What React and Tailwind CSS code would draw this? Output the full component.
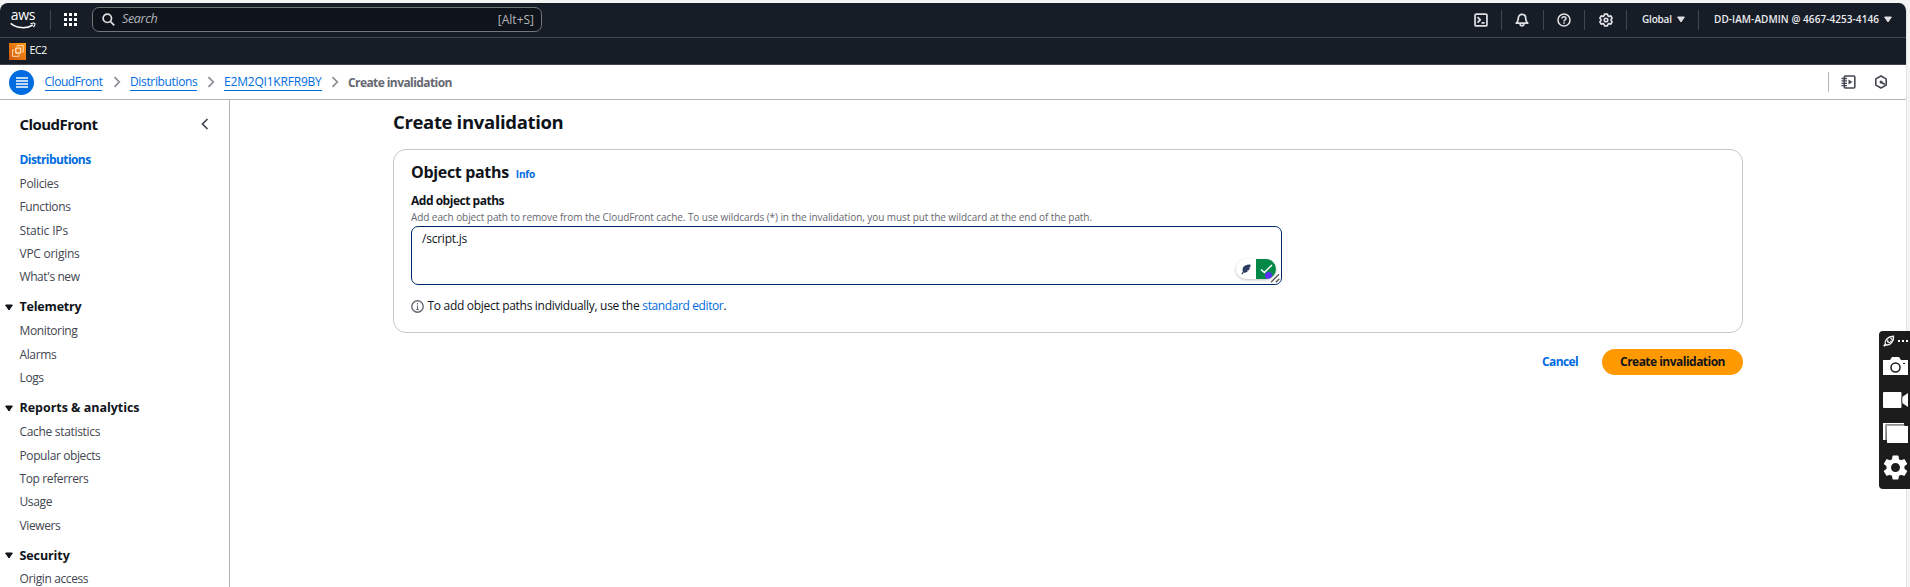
import React from "react";

const Chevron = () => (
  <svg width="8" height="12" viewBox="0 0 8 12" fill="none" stroke="#8c8c94" strokeWidth="1.7" className="shrink-0">
    <path d="M1.5 1.2 6.3 6 1.5 10.8" />
  </svg>
);

const Caret = ({ color }) => (
  <svg width="8" height="7" viewBox="0 0 8 7" fill={color} stroke={color} strokeWidth="1" strokeLinejoin="round" className="shrink-0">
    <path d="M.6 1h6.800L4 6z" />
  </svg>
);

const Divider = () => <span className="h-5 w-px shrink-0 bg-[#424650]" />;

const stroke16 = {
  width: 14,
  height: 14,
  viewBox: "0 0 16 16",
  fill: "none",
  strokeWidth: 2,
  strokeLinejoin: "round",
};

const TerminalIcon = () => (
  <svg {...stroke16} stroke="#dedee3">
    <rect x="1.2" y="1.2" width="13.6" height="13.6" rx="1.5" />
    <path d="M4 4.6 7.2 7.8 4 11M8.6 11.3h3.6" />
  </svg>
);

const BellIcon = () => (
  <svg {...stroke16} stroke="#dedee3">
    <path d="M8 1.6c-2.6 0-4.2 1.9-4.2 4.4 0 3-.9 4.3-2.3 5.7h13c-1.4-1.4-2.3-2.7-2.3-5.7C12.2 3.500 10.600 1.600 8 1.600z" />
    <path d="M5.8 12.500c.2 1.500 1 2.300 2.200 2.300s2-.8 2.200-2.300" />
  </svg>
);

const HelpIcon = () => (
  <svg {...stroke16} stroke="#dedee3" strokeWidth="1.8">
    <circle cx="8" cy="8" r="6.9" />
    <path d="M5.7 6.400C5.700 5 6.700 4.200 8 4.200s2.300.8 2.300 2c0 1.700-2.300 1.700-2.300 3.500M8 10.700v1.700" />
  </svg>
);

const GearIcon = () => (
  <svg {...stroke16} stroke="#dedee3" strokeWidth="1.9">
    <path d="M6.300 1.300h3.400l.5 1.900 1.300.7 2-.6 1.500 2.700-1.300 1.400v1.200l1.300 1.400-1.500 2.700-2-.6-1.300.7-.5 1.900H6.300l-.5-1.900-1.300-.7-2 .6L1 10l1.300-1.400V7.400L1 6l1.500-2.700 2 .6 1.300-.7z" />
    <circle cx="8" cy="8" r="2" />
  </svg>
);

const TopBar = () => (
  <div className="flex h-[35px] items-center border-b border-[#424650] pb-px">
    <div className="ml-[10px] flex w-[26px] flex-col items-center">
      <span className="-mt-[2px] text-[14px] font-normal leading-[12px] tracking-[-0.200px] text-white">aws</span>
      <svg width="26" height="7" viewBox="0 0 26 7" fill="none" stroke="#fff" strokeWidth="1.5" className="mt-px">
        <path d="M.7 1.300C7 6.500 16.500 7 22.800 3" />
        <path d="M20.500 1.700c2-.7 3.800-.8 4.200-.3.400.5-.1 2.200-1.200 3.700" strokeWidth="1.2" />
      </svg>
    </div>
    <span className="ml-[14px] flex"><Divider /></span>
    <div className="ml-[13px] grid grid-cols-3 gap-[2px]">
      {Array.from({ length: 9 }, (_, i) => (
        <span key={i} className="size-[3px] bg-white" />
      ))}
    </div>
    <div className="ml-[15px] flex h-[25px] w-[450px] items-center rounded-[7px] border border-[#72747e] bg-[#0f141a] pl-[9px] pr-[7px]">
      <svg width="13" height="13" viewBox="0 0 13 13" fill="none" stroke="#dedee3" strokeWidth="1.7">
        <circle cx="5.3" cy="5.3" r="4.2" />
        <path d="m8.300 8.300 4 4" />
      </svg>
      <span className="ml-[7px] text-[12.5px] italic tracking-[-0.35px] text-[#b4b4bb]">Search</span>
      <span className="ml-auto text-[12px] text-[#b4b4bb]">[Alt+S]</span>
    </div>
    <div className="ml-auto flex items-center">
      <TerminalIcon />
      <span className="ml-[13px] flex"><Divider /></span>
      <span className="ml-[13px] flex"><BellIcon /></span>
      <span className="ml-[14px] flex"><Divider /></span>
      <span className="ml-[13px] flex"><HelpIcon /></span>
      <span className="ml-[13px] flex"><Divider /></span>
      <span className="ml-[14px] flex"><GearIcon /></span>
      <span className="ml-[13px] flex"><Divider /></span>
      <span className="ml-[15px] w-[35px] whitespace-nowrap text-[10px] font-semibold tracking-[-0.2px] text-[#ebebf0]">Global</span>
      <Caret color="#dedee3" />
      <span className="ml-[13px] flex"><Divider /></span>
      <span className="ml-[15px] w-[170px] whitespace-nowrap text-[10px] font-semibold tracking-[0.06px] text-[#ebebf0]">DD-IAM-ADMIN @ 4667-4253-4146</span>
      <Caret color="#dedee3" />
      <span className="w-[14px]" />
    </div>
  </div>
);

const FavoritesBar = () => (
  <div className="flex h-[27px] items-center border-b border-[#424650] pl-[9px]">
    <span className="flex size-[17px] items-center justify-center bg-gradient-to-tr from-[#cf5512] to-[#fb9a10]">
      <svg width="12" height="12" viewBox="0 0 12 12" fill="none" stroke="#ffe3c4" strokeWidth="0.9">
        <rect x="3.8" y="3.2" width="4.8" height="4.8" rx="0.5" strokeWidth="1.3" />
        <path d="M5 1.600V.6h6.300v6.300h-1.200M2.400 5H.6v6.300h6.300V9.600" />
      </svg>
    </span>
    <span className="ml-[3.5px] text-[10.5px] font-medium tracking-[-0.4px] text-white">EC2</span>
  </div>
);

const Crumb = ({ children }) => (
  <span className="h-[17px] whitespace-nowrap border-b border-[#006ce0] text-[12px] leading-[16px] text-[#006ce0]">{children}</span>
);

const Breadcrumbs = () => (
  <div className="flex h-[35px] items-center border-b border-[#b4b4bb] bg-white">
    <span className="ml-[9px] flex size-[25px] items-center justify-center rounded-full bg-[#006ce0]">
      <svg width="12" height="11" viewBox="0 0 12 11" stroke="#fff" strokeWidth="1.3">
        <path d="M0 1h12M0 4h12M0 7h12M0 10h12" />
      </svg>
    </span>
    <div className="ml-[10.5px] flex items-center">
      <span className="flex w-[68.5px] tracking-[-0.45px]"><Crumb>CloudFront</Crumb></span>
      <Chevron />
      <span className="ml-[9px] flex w-[77px] tracking-[-0.35px]"><Crumb>Distributions</Crumb></span>
      <Chevron />
      <span className="ml-[9px] flex w-[107px] tracking-[-0.2px]"><Crumb>E2M2QI1KRFR9BY</Crumb></span>
      <Chevron />
      <span className="ml-[9px] whitespace-nowrap text-[12px] font-bold leading-[17px] tracking-[-0.58px] text-[#656871]">Create invalidation</span>
    </div>
    <span className="ml-auto h-5 w-px bg-[#b4b4bb]" />
    <svg width="15" height="14" viewBox="0 0 15 14" fill="none" stroke="#424650" strokeWidth="1.6" className="ml-[12px]">
      <rect x="3.3" y="1" width="10.5" height="12" rx="1" />
      <path d="M.5 3.500h5.500M.5 5.900h5.500M.5 8.300h5.500M.5 10.700h5.500" strokeWidth="1.3" />
      <path d="M7.500 4.500v5L11.500 7z" fill="#424650" stroke="none" />
    </svg>
    <svg width="14" height="14" viewBox="0 0 14 14" fill="none" stroke="#424650" strokeWidth="1.6" className="ml-[18px] mr-[18px]">
      <path d="M7 1 12.200 3.900v6.200L7 13l-5.200-2.900V3.900z" strokeLinejoin="round" />
      <path d="M7 7l3.800 2.500" strokeWidth="1.6" />
      <circle cx="7" cy="7" r="1.5" fill="#424650" stroke="none" />
    </svg>
  </div>
);

const NavItem = ({ children, className = "" }) => (
  <li className={"h-[23.3px] whitespace-nowrap pl-[19.5px] text-[12px] leading-[23.3px] text-[#424650] " + className}>{children}</li>
);

const NavHeading = ({ children, className = "" }) => (
  <h3 className="mt-[7px] mb-[1px] flex h-[23px] items-center text-[12.5px] font-bold leading-[23px] text-[#0f141a]">
    <span className="ml-[4.5px] mt-px flex w-[15px]"><Caret color="#0f141a" /></span>
    <span className={"whitespace-nowrap " + className}>{children}</span>
  </h3>
);

const Sidebar = () => (
  <nav className="h-full w-[230px] shrink-0 overflow-hidden border-r border-[#b4b4bb] bg-white">
    <div className="flex h-[48px] items-center pl-[19.5px] pr-[20px]">
      <h2 className="text-[15px] font-bold tracking-[-0.55px] text-[#0f141a]">CloudFront</h2>
      <svg width="8" height="12" viewBox="0 0 8 12" fill="none" stroke="#424650" strokeWidth="1.7" className="mb-[1px] ml-auto">
        <path d="M6.500 1 1.500 6l5 5" />
      </svg>
    </div>
    <ul>
      <li className="h-[24px] pl-[19.5px] text-[12px] font-bold leading-[23px] tracking-[-0.57px] text-[#006ce0]">Distributions</li>
      <NavItem className="tracking-[-0.34px]">Policies</NavItem>
      <NavItem className="tracking-[-0.36px]">Functions</NavItem>
      <NavItem className="tracking-[-0.15px]">Static IPs</NavItem>
      <NavItem className="tracking-[-0.26px]">VPC origins</NavItem>
      <NavItem className="tracking-[-0.42px]">What's new</NavItem>
    </ul>
    <NavHeading className="tracking-[-0.19px]">Telemetry</NavHeading>
    <ul>
      <NavItem className="tracking-[-0.38px]">Monitoring</NavItem>
      <NavItem className="tracking-[-0.38px]">Alarms</NavItem>
      <NavItem className="tracking-[-0.38px]">Logs</NavItem>
    </ul>
    <NavHeading className="tracking-[-0.03px]">Reports &amp; analytics</NavHeading>
    <ul>
      <NavItem className="tracking-[-0.32px]">Cache statistics</NavItem>
      <NavItem className="tracking-[-0.4px]">Popular objects</NavItem>
      <NavItem className="tracking-[-0.38px]">Top referrers</NavItem>
      <NavItem className="tracking-[-0.38px]">Usage</NavItem>
      <NavItem className="tracking-[-0.38px]">Viewers</NavItem>
    </ul>
    <NavHeading className="tracking-[-0.1px]">Security</NavHeading>
    <ul>
      <li className="whitespace-nowrap pl-[19.5px] pt-[3px] text-[12px] leading-[16px] tracking-[-0.38px] text-[#424650]">Origin access</li>
    </ul>
  </nav>
);

const WritingBadge = () => (
  <div className="absolute bottom-[5px] right-[5px] flex h-5 w-10 overflow-hidden rounded-full bg-white shadow-[0_1px_3px_rgba(0,0,0,0.25)]">
    <span className="flex w-5 items-center justify-center">
      <svg width="10" height="11" viewBox="0 0 10 11" fill="#2c3c63">
        <path d="M9.500.7C6.500.2 2.700 1.700 1.800 4.200c-.4 1.200-.3 2.300.1 3.200L.4 9.800l.7.600L2.700 8.500c1.500.5 3.200-.1 4.200-1.300l-1.200-.4 2.100-.5c.5-.7.9-1.500 1.100-2.200l-1.100-.2 1.500-.8c.3-.9.300-1.700.2-2.400z" />
      </svg>
    </span>
    <span className="relative flex w-5 items-center justify-center bg-[#048848]">
      <svg width="13" height="10" viewBox="0 0 13 10" fill="none" stroke="#fff" strokeWidth="1.5">
        <path d="m1 5.500 3.300 3L12 1" />
      </svg>
      <span className="absolute bottom-0 right-[4px] size-[7px] rounded-full bg-[#5b2dff]" />
    </span>
  </div>
);

const Main = () => (
  <main className="flex w-[1350px] flex-col pt-[8px]">
    <h1 className="h-7 whitespace-nowrap text-[18.5px] font-bold leading-7 tracking-[-0.35px] text-[#0f141a]">Create invalidation</h1>
    <section className="mt-[13px] h-[184px] rounded-[13px] border border-[#c6c6cd] px-[17px] pt-[12px]">
      <div className="flex h-5 items-baseline">
        <h2 className="whitespace-nowrap text-[16px] font-bold leading-5 tracking-[-0.33px] text-[#0f141a]">Object paths</h2>
        <span className="ml-[7px] text-[10px] font-bold tracking-[-0.2px] text-[#006ce0]">Info</span>
      </div>
      <div className="mt-[11px] h-4 text-[12px] font-bold leading-4 tracking-[-0.48px] text-[#0f141a]">Add object paths</div>
      <p className="h-[17px] whitespace-nowrap text-[10px] leading-[16px] tracking-[-0.077px] text-[#656871]">
        Add each object path to remove from the CloudFront cache. To use wildcards (*) in the invalidation, you must put the wildcard at the end of the path.
      </p>
      <div className="relative h-[59px] w-[871px] rounded-[7px] border border-[#002b66] bg-white pl-[10px] pt-[4px] text-[12px] leading-[16px] tracking-[-0.23px] text-[#0f141a]">
        /script.js
        <WritingBadge />
        <svg width="10" height="10" viewBox="0 0 10 10" stroke="#555" strokeWidth="1.3" className="absolute bottom-[1px] right-[1px]">
          <path d="M1 9.300 9 1.300M5.800 9.300 9.300 5.800" />
        </svg>
      </div>
      <div className="mt-[12px] flex h-[18px] items-center text-[12px] leading-[18px] text-[#0f141a]">
        <svg width="13" height="13" viewBox="0 0 13 13" fill="none" stroke="#656871" strokeWidth="1.4">
          <circle cx="6.5" cy="6.5" r="5.7" />
          <path d="M6.500 5.500v4.200M6.500 3v1.400M5.200 9.500h2.600" strokeWidth="1.1" />
        </svg>
        <span className="ml-[3.5px] whitespace-nowrap tracking-[-0.3px]">To add object paths individually, use the</span>
        <span className="ml-[3px] whitespace-nowrap tracking-[-0.39px] text-[#006ce0]">standard editor</span>
        <span>.</span>
      </div>
    </section>
    <div className="mt-4 flex h-[26px] items-center justify-end">
      <button className="text-[12px] font-bold tracking-[-0.62px] text-[#006ce0]">Cancel</button>
      <button className="ml-[24px] flex h-[26px] w-[141px] items-center justify-center rounded-full bg-[#ff9900] text-[12px] font-bold tracking-[-0.52px] text-[#0f141a]">
        <span className="whitespace-nowrap">Create invalidation</span>
      </button>
    </div>
  </main>
);

const CapturePanel = () => (
  <aside className="absolute right-0 top-[331px] flex h-[158px] w-[31px] flex-col items-start rounded-l-[4px] bg-[#1c1c1c] pl-[4px] pt-[4px]">
    <div className="flex h-[12px] items-center">
      <svg width="12" height="12" viewBox="0 0 12 12" fill="none" stroke="#eee" strokeWidth="1.4">
        <path d="M.8 11.200 2.300 9C1.300 5.500 4.500 1.500 10.500 1.200 11.200 6 7.500 10.800 3 9.800z" />
        <path d="M5 4.800c-.8 1.500-.2 3 1.300 2.800s2-1.200 2-2M7.500 3.200l2 1.600" />
      </svg>
      <span className="ml-[3px] flex gap-[2px]">
        <i className="size-[2px] bg-white" />
        <i className="size-[2px] bg-white" />
        <i className="size-[2px] bg-white" />
      </span>
    </div>
    <svg width="25" height="18" viewBox="0 0 25 18" className="mt-[10px]">
      <path d="M0 3h7l2-3h7l2 3h7v15H0z" fill="#fff" />
      <circle cx="12.5" cy="10.5" r="4.5" fill="none" stroke="#1c1c1c" strokeWidth="1.5" />
      <path d="M20 6.500h2" stroke="#1c1c1c" />
    </svg>
    <svg width="25" height="16" viewBox="0 0 25 16" className="mt-[17px]" fill="#fff">
      <path d="M1 0h16.500q1 0 1 1v4.500L25 1v14l-6.500-4.500V15q0 1-1 1H1q-1 0-1-1V1q0-1 1-1z" />
      <path d="M18.800 5v6" stroke="#1c1c1c" />
    </svg>
    <svg width="25" height="20" viewBox="0 0 25 20" className="mt-[15px]" fill="#fff">
      <path d="M0 0h21v1.500H2.500V17H0zM3.500 3H25v17H4z" />
      <path d="M3 17V2.500h18.500" stroke="#aaa" strokeWidth="1" fill="none" />
    </svg>
    <svg width="25" height="25" viewBox="2 2 20 20" className="mt-[12px]" fill="#fff">
      <path d="M19.140 12.940c.040-.300.060-.610.060-.940 0-.320-.020-.640-.070-.940l2.030-1.580c.180-.140.230-.410.120-.610l-1.920-3.320c-.120-.220-.370-.290-.590-.220l-2.390.960c-.500-.380-1.030-.700-1.620-.940l-.360-2.540c-.040-.240-.240-.410-.480-.410h-3.840c-.240 0-.430.170-.470.410l-.360 2.540c-.590.240-1.130.570-1.620.940l-2.390-.960c-.220-.080-.470 0-.590.220L2.740 8.870c-.120.210-.080.470.120.610l2.030 1.580c-.050.300-.090.630-.090.940s.020.640.070.940l-2.030 1.580c-.180.140-.230.410-.120.610l1.920 3.320c.120.220.370.290.590.220l2.390-.960c.500.380 1.030.700 1.620.940l.360 2.540c.050.240.240.410.480.410h3.840c.240 0 .440-.170.470-.410l.360-2.540c.590-.240 1.130-.560 1.620-.940l2.390.960c.220.080.470 0 .590-.220l1.920-3.320c.120-.220.070-.470-.120-.610zM12 15.600c-1.980 0-3.600-1.620-3.600-3.600s1.620-3.600 3.600-3.600 3.600 1.620 3.600 3.600-1.620 3.600-3.600 3.600z" />
    </svg>
  </aside>
);

export default function App() {
  return (
    <div className="relative h-[587px] w-[1910px] overflow-hidden bg-[#f4f4f5] pt-[3px] font-['Open_Sans','Noto_Sans',sans-serif]">
      <div className="flex h-full w-[1907px] flex-col overflow-hidden rounded-t-[8px] border-r border-[#e2e2e4] bg-white">
        <header className="shrink-0 bg-[#161d26]">
          <TopBar />
          <FavoritesBar />
          <Breadcrumbs />
        </header>
        <div className="flex min-h-0 flex-1 bg-white">
          <Sidebar />
          <div className="flex flex-1 pl-[163px]">
            <Main />
          </div>
        </div>
      </div>
      <CapturePanel />
    </div>
  );
}
